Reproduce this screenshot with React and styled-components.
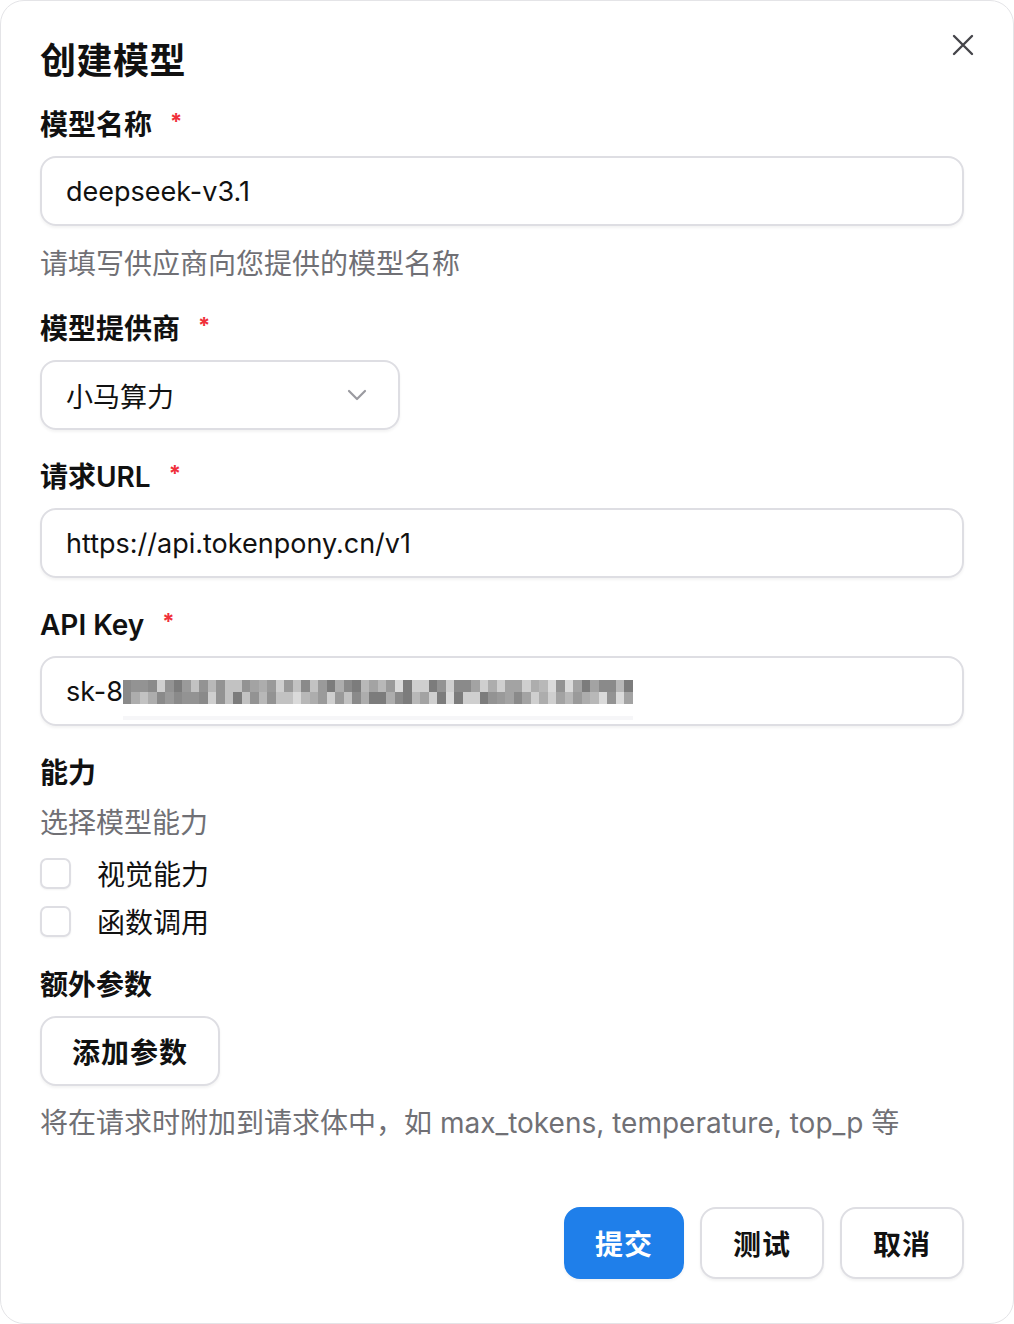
import React from 'react'
import styled, { createGlobalStyle } from 'styled-components'

const Global = createGlobalStyle`
  html, body { margin:0; padding:0; background:#fff; }
  body { font-family: Inter, "Noto Sans CJK SC", "Noto Sans", sans-serif; color:#111; }
`;

const Card = styled.div`
  box-sizing:border-box;
  width:1014px;
  height:1324px;
  border:1px solid #e4e4e7;
  border-radius:24px;
  background:#fff;
  padding:38px 49px 0 39px;
  position:relative;
`;

const Title = styled.h1`
  margin:0 0 24px;
  font-size:36px;
  line-height:44px;
  font-weight:700;
  letter-spacing:0.5px;
`;

const Close = styled.button`
  position:absolute;
  top:30px;
  right:36px;
  width:28px;
  height:28px;
  padding:0;
  border:none;
  background:none;
  display:flex;
  align-items:center;
  justify-content:center;
`;

const Form = styled.div`
  display:flex;
  flex-direction:column;
  gap:29px;
`;

const Field = styled.div`
  display:flex;
  flex-direction:column;
  gap:${({ $gap }) => $gap || 13}px;
`;

const Label = styled.div`
  font-size:28px;
  line-height:36px;
  font-weight:600;
  display:flex;
  align-items:center;
  gap:18px;
`;

const Star = styled.span`
  color:#f0303a;
  font-size:22px;
  font-weight:700;
  line-height:1;
  margin-top:-8px;
`;

const Input = styled.div`
  box-sizing:border-box;
  flex:none;
  height:70px;
  width:${({ $w }) => $w || '100%'};
  border:2px solid #dedee3;
  border-radius:16px;
  box-shadow:0 2px 3px rgba(0,0,0,0.05);
  padding:0 24px;
  display:flex;
  align-items:center;
  justify-content:space-between;
  font-size:27px;
  color:#111;
  position:relative;
`;

const Help = styled.div`
  font-size:28px;
  line-height:36px;
  color:#707075;
  margin-top:${({ $mt }) => $mt || 0}px;
`;

const Mosaic = styled.span`
  display:grid;
  grid-template-columns:repeat(60, 8.5px);
  grid-auto-rows:12px;
  margin-top:2px;
  position:relative;
  &::after {
    content:'';
    position:absolute;
    left:0; right:0;
    bottom:-16px;
    height:4px;
    background:#f6f6f8;
  }
`;

const Row = styled.div`
  display:flex;
  align-items:center;
  height:36px;
  gap:26px;
  font-size:28px;
`;

const Checks = styled.div`
  display:flex;
  flex-direction:column;
  gap:12px;
`;

const Box = styled.span`
  box-sizing:border-box;
  width:31px;
  height:31px;
  border:2px solid #dedee3;
  border-radius:7px;
  box-shadow:0 1px 2px rgba(0,0,0,0.05);
`;

const Button = styled.button`
  box-sizing:border-box;
  flex:none;
  height:${({ $h }) => $h || 70}px;
  width:${({ $w }) => $w}px;
  border-radius:16px;
  border:2px solid ${({ $primary }) => ($primary ? '#1f7fea' : '#dedee3')};
  background:${({ $primary }) => ($primary ? '#1f7fea' : '#fff')};
  color:${({ $primary }) => ($primary ? '#fff' : '#111')};
  box-shadow:0 2px 3px rgba(0,0,0,0.05);
  font-family:inherit;
  font-size:28px;
  font-weight:700;
  letter-spacing:1px;
  padding:0;
`;

const Footer = styled.div`
  display:flex;
  justify-content:flex-end;
  gap:16px;
  margin-top:66px;
`;

const grays = ['#8a8a8a','#a3a3a3','#b8b8b8','#cfcfcf','#9a9a9a','#7c7c7c','#c2c2c2','#adadad','#939393','#dadada'];
const cells = Array.from({ length: 120 }, (_, i) => grays[(i * 7 + ((i * i) % 11) + (i >> 3)) % grays.length]);

export default function App() {
  return (
    <>
      <Global />
      <Card>
        <Title>创建模型</Title>
        <Close aria-label="关闭">
          <svg width="22" height="22" viewBox="0 0 22 22">
            <path d="M2 2 L20 20 M20 2 L2 20" stroke="#45454a" strokeWidth="2.4" strokeLinecap="round" />
          </svg>
        </Close>
        <Form>
          <Field>
            <Label>模型名称<Star>*</Star></Label>
            <Input>deepseek-v3.1</Input>
            <Help $mt={7}>请填写供应商向您提供的模型名称</Help>
          </Field>
          <Field>
            <Label>模型提供商<Star>*</Star></Label>
            <Input $w="360px">
              小马算力
              <svg width="20" height="12" viewBox="0 0 20 12" style={{ marginRight: 7 }}>
                <path d="M2 2 L10 10 L18 2" fill="none" stroke="#9a9aa0" strokeWidth="2.2" strokeLinecap="round" strokeLinejoin="round" />
              </svg>
            </Input>
          </Field>
          <Field>
            <Label>请求URL<Star>*</Star></Label>
            <Input>https://api.tokenpony.cn/v1</Input>
          </Field>
          <Field>
            <Label>API Key<Star>*</Star></Label>
            <Input style={{ justifyContent: 'flex-start' }}>
              sk-8
              <Mosaic>
                {cells.map((c, i) => (
                  <span key={i} style={{ background: c }} />
                ))}
              </Mosaic>
            </Input>
          </Field>
          <Field $gap={14}>
            <Label>能力</Label>
            <Help>选择模型能力</Help>
            <Checks>
              <Row><Box />视觉能力</Row>
              <Row><Box />函数调用</Row>
            </Checks>
          </Field>
          <Field style={{ marginTop: -1 }}>
            <Label>额外参数</Label>
            <Button $w={180}>添加参数</Button>
            <Help $mt={6}>将在请求时附加到请求体中，如 max_tokens, temperature, top_p 等</Help>
          </Field>
        </Form>
        <Footer>
          <Button $primary $w={120} $h={72}>提交</Button>
          <Button $w={124} $h={72}>测试</Button>
          <Button $w={124} $h={72}>取消</Button>
        </Footer>
      </Card>
    </>
  )
}
